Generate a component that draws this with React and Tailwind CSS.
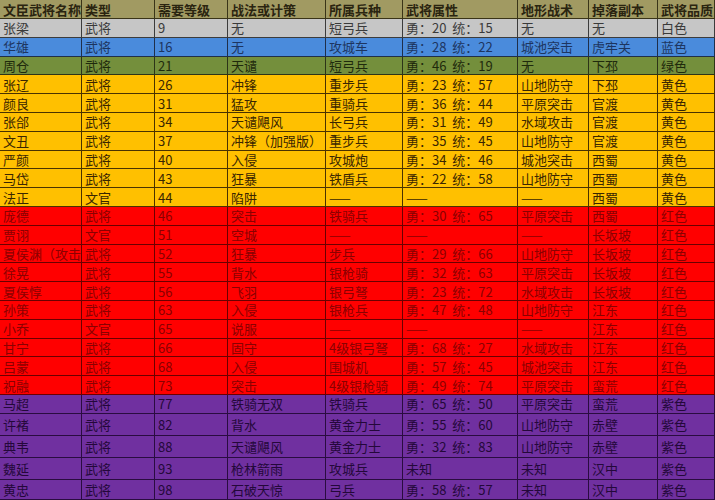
import React from "react";

const cols = "grid grid-cols-[82px_73px_73px_98px_77px_115px_71px_69px_57px]";

const header = ["文臣武将名称", "类型", "需要等级", "战法或计策", "所属兵种", "武将属性", "地形战术", "掉落副本", "武将品质"];

const D = "——";
const rows = [
  ["张梁", "武将", "9", "无", "短弓兵", "勇：20  统：15", "无", "无", "白色", "s"],
  ["华雄", "武将", "16", "无", "攻城车", "勇：28  统：22", "城池突击", "虎牢关", "蓝色", "b"],
  ["周仓", "武将", "21", "天谴", "短弓兵", "勇：46  统：19", "无", "下邳", "绿色", "g"],
  ["张辽", "武将", "26", "冲锋", "重步兵", "勇：23  统：57", "山地防守", "下邳", "黄色", "y"],
  ["颜良", "武将", "31", "猛攻", "重骑兵", "勇：36  统：44", "平原突击", "官渡", "黄色", "y"],
  ["张郃", "武将", "34", "天谴飓风", "长弓兵", "勇：31  统：49", "水域攻击", "官渡", "黄色", "y"],
  ["文丑", "武将", "37", "冲锋（加强版）", "重步兵", "勇：35  统：45", "山地防守", "官渡", "黄色", "y"],
  ["严颜", "武将", "40", "入侵", "攻城炮", "勇：34  统：46", "城池突击", "西蜀", "黄色", "y"],
  ["马岱", "武将", "43", "狂暴", "铁盾兵", "勇：22  统：58", "山地防守", "西蜀", "黄色", "y"],
  ["法正", "文官", "44", "陷阱", D, D, D, "西蜀", "黄色", "y"],
  ["庞德", "武将", "46", "突击", "铁骑兵", "勇：30  统：65", "平原突击", "西蜀", "红色", "r"],
  ["贾诩", "文官", "51", "空城", D, D, D, "长坂坡", "红色", "r"],
  ["夏侯渊（攻击型）", "武将", "52", "狂暴", "步兵", "勇：29  统：66", "山地防守", "长坂坡", "红色", "r"],
  ["徐晃", "武将", "55", "背水", "银枪骑", "勇：32  统：63", "平原突击", "长坂坡", "红色", "r"],
  ["夏侯惇", "武将", "56", "飞羽", "银弓弩", "勇：23  统：72", "水域攻击", "长坂坡", "红色", "r"],
  ["孙策", "武将", "63", "入侵", "银枪兵", "勇：47  统：48", "山地防守", "江东", "红色", "r"],
  ["小乔", "文官", "65", "说服", D, D, D, "江东", "红色", "r"],
  ["甘宁", "武将", "66", "固守", "4级银弓弩", "勇：68  统：27", "水域攻击", "江东", "红色", "r"],
  ["吕蒙", "武将", "68", "入侵", "围城机", "勇：57  统：45", "城池突击", "江东", "红色", "r"],
  ["祝融", "武将", "73", "突击", "4级银枪骑", "勇：49  统：74", "平原突击", "蛮荒", "红色", "r"],
  ["马超", "武将", "77", "铁骑无双", "铁骑兵", "勇：65  统：50", "平原突击", "蛮荒", "紫色", "p"],
  ["许褚", "武将", "82", "背水", "黄金力士", "勇：55  统：60", "山地防守", "赤壁", "紫色", "p"],
  ["典韦", "武将", "88", "天谴飓风", "黄金力士", "勇：32  统：83", "山地防守", "赤壁", "紫色", "p"],
  ["魏延", "武将", "93", "枪林箭雨", "攻城兵", "未知", "未知", "汉中", "紫色", "p"],
  ["黄忠", "武将", "98", "石破天惊", "弓兵", "勇：58  统：57", "未知", "汉中", "紫色", "p"],
];

const theme = {
  s: "bg-[#c6c6c6] text-[#3a3a3a] border-[#3c3c3c]",
  b: "bg-[#4a8bdc] text-[#1d3560] border-[#1f2f4a]",
  g: "bg-[#748f3c] text-[#1f2a0c] border-[#2c3418]",
  y: "bg-[#ffc000] text-[#3a2600] border-[#4a3200]",
  r: "bg-[#ff0000] text-[#8a0000] border-[#6a0000]",
  p: "bg-[#7030a0] text-[#24083a] border-[#2a0c40]",
};

const heights = (i) => {
  if (i < 20) return "h-[18.8px]";
  if (i === 20) return "h-[19px]";
  if (i < 24) return "h-[22px]";
  return "h-[20px]";
};

export default function App() {
  return (
    <div
      className="w-[715px] h-[500px] overflow-hidden bg-[#7030a0] text-[13px] leading-none"
      style={{ fontFamily: '"Noto Sans CJK SC", "Noto Sans", sans-serif' }}
    >
      <div className={`${cols} h-[19px] bg-[#a19a62] text-[#2a2410] font-bold`}>
        {header.map((h, j) => (
          <div
            key={j}
            className="flex items-center pl-[3px] border-r border-b border-[#3a3418] overflow-hidden whitespace-nowrap"
          >
            {h}
          </div>
        ))}
      </div>
      {rows.map((r, i) => {
        const t = theme[r[9]];
        return (
          <div key={i} className={`${cols} ${heights(i)} ${t}`}>
            {r.slice(0, 9).map((c, j) => (
              <div
                key={j}
                className={`flex items-center pl-[3px] border-r border-b ${t} overflow-hidden whitespace-pre`}
              >
                {c}
              </div>
            ))}
          </div>
        );
      })}
    </div>
  );
}
